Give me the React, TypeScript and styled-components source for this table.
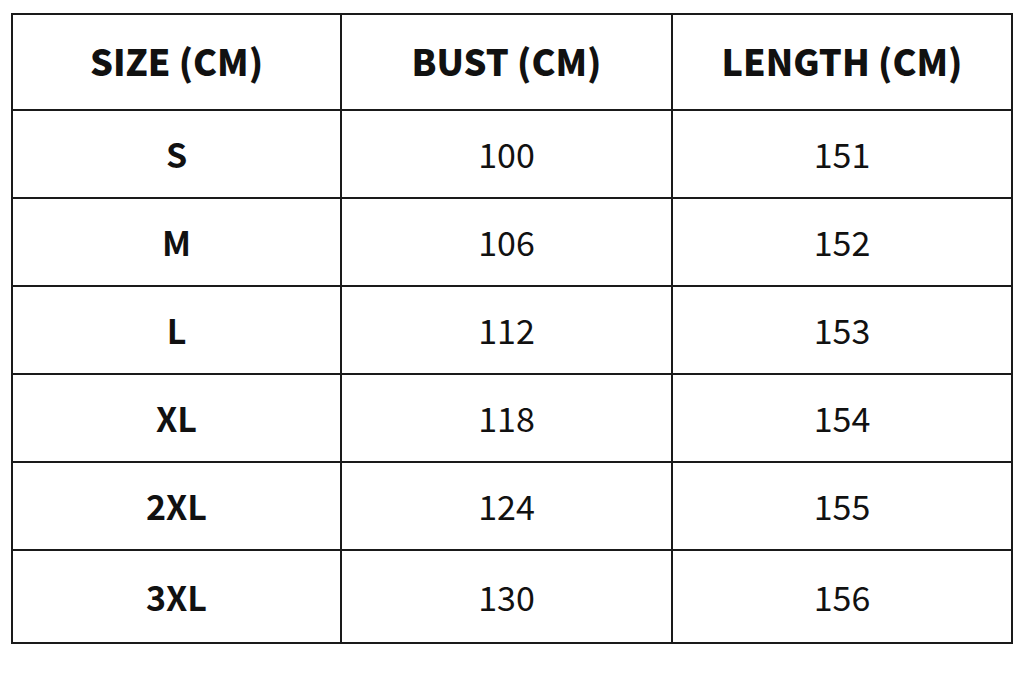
import React from "react";
import styled, { createGlobalStyle } from "styled-components";

const GlobalStyle = createGlobalStyle`
  html, body {
    margin: 0;
    padding: 0;
    background: #ffffff;
  }
  body {
    font-family: "Noto Sans CJK SC", "Noto Sans", sans-serif;
    color: #111111;
  }
`;

const Page = styled.div`
  width: 1024px;
  height: 683px;
  padding: 13px 0 0 11px;
  box-sizing: border-box;
  background: #ffffff;
`;

const Grid = styled.div`
  display: grid;
  grid-template-columns: 327px 329px 338px;
  grid-template-rows: 94px repeat(5, 86px) 91px;
  gap: 2px;
  padding: 2px;
  width: 1002px;
  box-sizing: border-box;
  background: #1a1a1a;
`;

const Cell = styled.div<{ $head?: boolean; $bold?: boolean }>`
  display: flex;
  align-items: center;
  justify-content: center;
  padding-bottom: ${(p) => (p.$head ? "4px" : "0")};
  background: #ffffff;
  font-size: ${(p) => (p.$head ? "36px" : "34px")};
  font-weight: ${(p) => (p.$head ? 900 : p.$bold ? 700 : 400)};
  line-height: 1;
  color: #111111;
`;

const headers = ["SIZE (CM)", "BUST (CM)", "LENGTH (CM)"];

const rows = [
  ["S", "100", "151"],
  ["M", "106", "152"],
  ["L", "112", "153"],
  ["XL", "118", "154"],
  ["2XL", "124", "155"],
  ["3XL", "130", "156"],
];

const App = () => {
  return (
    <>
      <GlobalStyle />
      <Page>
        <Grid>
          {headers.map((h) => (
            <Cell key={h} $head>
              {h}
            </Cell>
          ))}
          {rows.map((r) =>
            r.map((v, i) => (
              <Cell key={r[0] + i} $bold={i === 0}>
                {v}
              </Cell>
            ))
          )}
        </Grid>
      </Page>
    </>
  );
};

export default App;
